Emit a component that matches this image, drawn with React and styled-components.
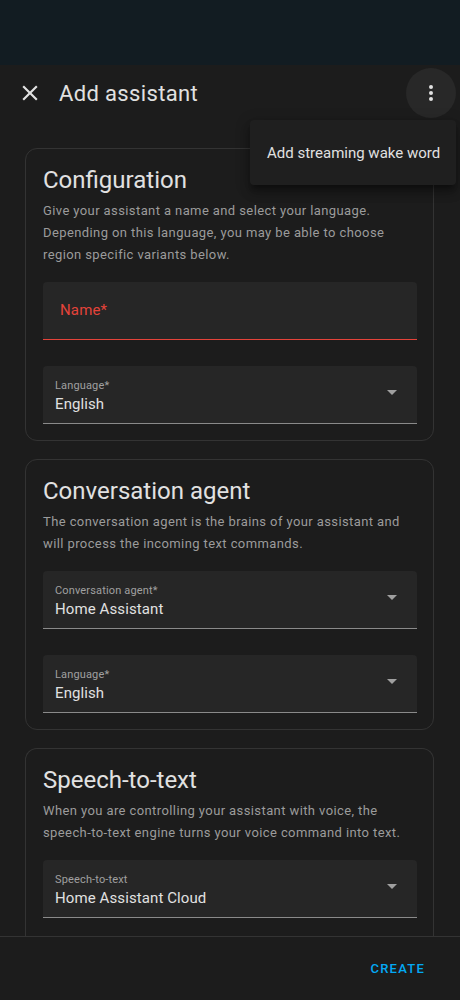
import React from "react";
import styled, { createGlobalStyle } from "styled-components";

const GlobalStyle = createGlobalStyle`
	html, body {
		margin: 0;
		padding: 0;
		background: #1c1c1c;
		font-family: Roboto, "Noto Sans", sans-serif;
		-webkit-font-smoothing: antialiased;
	}
`;

const Page = styled.div`
	display: flex;
	flex-direction: column;
	width: 460px;
	height: 1000px;
	overflow: hidden;
`;

const Scrim = styled.div`
	height: 65px;
	flex-shrink: 0;
	background-color: #121c22;
`;

const Dialog = styled.div`
	position: relative;
	flex: 1;
	display: flex;
	flex-direction: column;
	min-height: 0;
	background-color: #1c1c1c;
	color: #e1e1e1;
`;

const Header = styled.header`
	display: flex;
	align-items: center;
	height: 56px;
	flex-shrink: 0;
	padding: 0 4px 0 17px;
`;

const CloseButton = styled.button`
	display: flex;
	align-items: center;
	justify-content: center;
	width: 26px;
	height: 26px;
	padding: 0;
	border: none;
	background: none;
	color: #e1e1e1;
`;

const Title = styled.h2`
	flex: 1;
	margin: 0 0 0 16px;
	font-size: 22px;
	letter-spacing: 0.35px;
	font-weight: 400;
	color: #e1e1e1;
`;

const MenuButton = styled.button`
	display: flex;
	align-items: center;
	justify-content: center;
	width: 50px;
	height: 50px;
	padding: 0;
	border: none;
	border-radius: 50%;
	background-color: #282828;
	color: #e1e1e1;
`;

const Menu = styled.div`
	position: absolute;
	top: 55px;
	right: 4px;
	width: 206px;
	padding: 8px 0;
	border-radius: 4px;
	background-color: #1f1f1f;
	box-shadow: 0 5px 5px -3px rgba(0, 0, 0, 0.3), 0 8px 10px 1px rgba(0, 0, 0, 0.2),
		0 3px 14px 2px rgba(0, 0, 0, 0.18);
	z-index: 2;
`;

const MenuItem = styled.div`
	height: 49px;
	display: flex;
	align-items: center;
	padding: 0 16px 0 17px;
	font-size: 15px;
	color: #e1e1e1;
	white-space: nowrap;
`;

const Content = styled.div`
	flex: 1;
	min-height: 0;
	overflow: hidden;
	display: flex;
	flex-direction: column;
	gap: 18px;
	padding: 27px 26px 0 25px;
`;

// $open: the last card runs on under the footer, so it has no bottom edge
const Card = styled.section`
	flex: ${p => (p.$open ? 1 : "0 0 auto")};
	border: 1px solid #333333;
	border-bottom: ${p => (p.$open ? "none" : "1px solid #333333")};
	border-radius: ${p => (p.$open ? "12px 12px 0 0" : "12px")};
	padding: 0 16px 16px 17px;
	display: flex;
	flex-direction: column;
`;

const CardTitle = styled.h3`
	margin: 15px 0 4px;
	font-size: 24px;
	line-height: 32px;
	font-weight: 400;
	color: #e1e1e1;
`;

const Description = styled.p`
	margin: 0 0 16px;
	font-size: 13px;
	line-height: 22px;
	letter-spacing: 0.4px;
	color: #9b9b9b;
`;

const Fields = styled.div`
	display: flex;
	flex-direction: column;
	gap: 26px;
`;

const FieldBox = styled.div`
	height: 58px;
	box-sizing: border-box;
	display: flex;
	align-items: center;
	border-radius: 4px 4px 0 0;
	background-color: #262626;
	border-bottom: 1px solid ${p => (p.$error ? "#e4433a" : "#8a8a8a")};
	padding: 0 20px 0 ${p => (p.$error ? "17px" : "12px")};
`;

const FieldText = styled.div`
	flex: 1;
	display: flex;
	flex-direction: column;
`;

const FloatLabel = styled.span`
	font-size: 11px;
	line-height: 16px;
	letter-spacing: 0.15px;
	color: #a0a0a0;
	margin-top: 2px;
`;

const Value = styled.span`
	font-size: 15px;
	line-height: 20px;
	letter-spacing: 0.1px;
	color: #e1e1e1;
`;

const Placeholder = styled.span`
	font-size: 15px;
	letter-spacing: 0.15px;
	color: #e4433a;
	margin-top: -2px;
`;

const Arrow = styled.span`
	width: 0;
	height: 0;
	border-left: 5px solid transparent;
	border-right: 5px solid transparent;
	border-top: 5px solid #a0a0a0;
	margin-top: -4px;
`;

const Footer = styled.footer`
	height: 64px;
	flex-shrink: 0;
	box-sizing: border-box;
	border-top: 1px solid #333333;
	display: flex;
	align-items: center;
	justify-content: flex-end;
	padding: 0 27px 0 0;
	background-color: #1c1c1c;
`;

const CreateButton = styled.button`
	border: none;
	background: none;
	padding: 0 8px;
	height: 36px;
	font-family: Roboto, sans-serif;
	font-size: 13px;
	font-weight: 500;
	letter-spacing: 1.25px;
	color: #03a9f4;
`;

const SelectField = ({ label, value }) => (
	<FieldBox>
		<FieldText>
			<FloatLabel>{label}</FloatLabel>
			<Value>{value}</Value>
		</FieldText>
		<Arrow />
	</FieldBox>
);

const CloseIcon = () => (
	<svg width="26" height="26" viewBox="0 0 24 24" fill="currentColor">
		<path d="M19,6.41L17.59,5L12,10.59L6.41,5L5,6.41L10.59,12L5,17.59L6.41,19L12,13.41L17.59,19L19,17.59L13.41,12L19,6.41Z" />
	</svg>
);

const DotsIcon = () => (
	<svg width="24" height="24" viewBox="0 0 24 24" fill="currentColor">
		<path d="M12,16A2,2 0 0,1 14,18A2,2 0 0,1 12,20A2,2 0 0,1 10,18A2,2 0 0,1 12,16M12,10A2,2 0 0,1 14,12A2,2 0 0,1 12,14A2,2 0 0,1 10,12A2,2 0 0,1 12,10M12,4A2,2 0 0,1 14,6A2,2 0 0,1 12,8A2,2 0 0,1 10,6A2,2 0 0,1 12,4Z" />
	</svg>
);

export default function App() {
	return (
		<Page>
			<GlobalStyle />
			<Scrim />
			<Dialog>
				<Header>
					<CloseButton>
						<CloseIcon />
					</CloseButton>
					<Title>Add assistant</Title>
					<MenuButton>
						<DotsIcon />
					</MenuButton>
				</Header>
				<Menu>
					<MenuItem>Add streaming wake word</MenuItem>
				</Menu>
				<Content>
					<Card>
						<CardTitle>Configuration</CardTitle>
						<Description>
							Give your assistant a name and select your language.
							Depending on this language, you may be able to choose
							region specific variants below.
						</Description>
						<Fields>
							<FieldBox $error>
								<Placeholder>Name*</Placeholder>
							</FieldBox>
							<SelectField label="Language*" value="English" />
						</Fields>
					</Card>
					<Card>
						<CardTitle>Conversation agent</CardTitle>
						<Description>
							The conversation agent is the brains of your assistant and
							will process the incoming text commands.
						</Description>
						<Fields>
							<SelectField label="Conversation agent*" value="Home Assistant" />
							<SelectField label="Language*" value="English" />
						</Fields>
					</Card>
					<Card $open>
						<CardTitle>Speech-to-text</CardTitle>
						<Description>
							When you are controlling your assistant with voice, the
							speech-to-text engine turns your voice command into text.
						</Description>
						<Fields>
							<SelectField label="Speech-to-text" value="Home Assistant Cloud" />
						</Fields>
					</Card>
				</Content>
				<Footer>
					<CreateButton>CREATE</CreateButton>
				</Footer>
			</Dialog>
		</Page>
	);
}
